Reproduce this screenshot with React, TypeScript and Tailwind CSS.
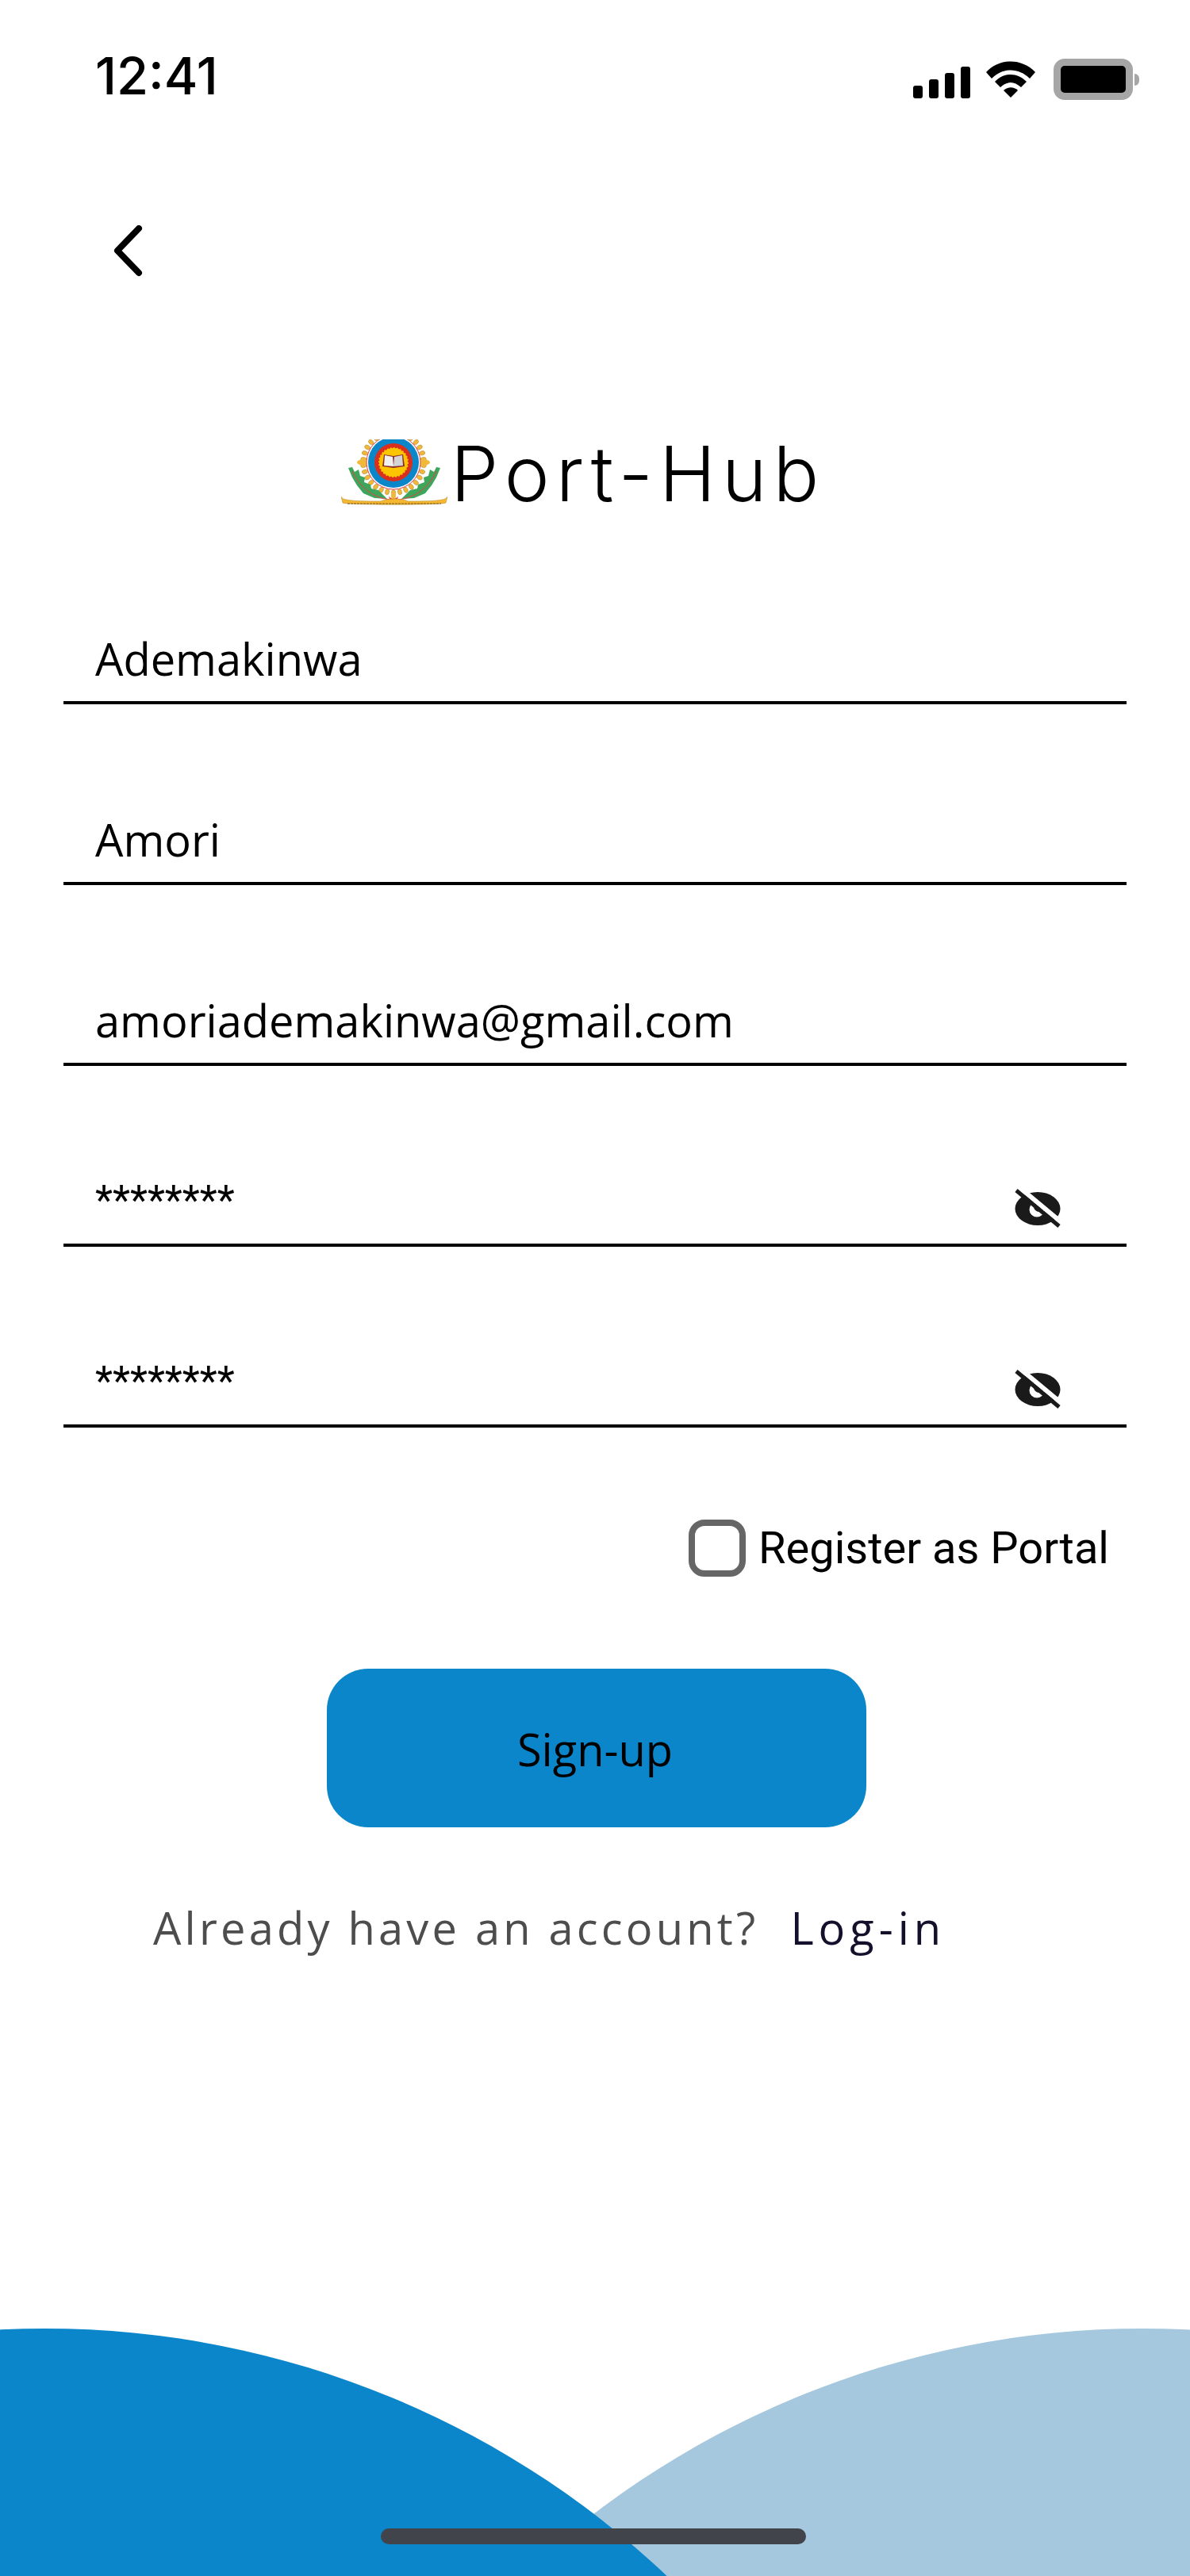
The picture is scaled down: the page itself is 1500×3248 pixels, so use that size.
const fields = [
  { value: "Ademakinwa" },
  { value: "Amori" },
  { value: "amoriademakinwa@gmail.com" },
  { value: "********", secret: true },
  { value: "********", secret: true },
]

function StatusIcons() {
  return (
    <div className="flex items-end gap-[20px]">
      <div className="flex items-end gap-[8px] pb-[2px]">
        <div className="h-[16px] w-[12px] rounded-[3px] bg-black" />
        <div className="h-[24px] w-[12px] rounded-[3px] bg-black" />
        <div className="h-[32px] w-[12px] rounded-[3px] bg-black" />
        <div className="h-[40px] w-[12px] rounded-[3px] bg-black" />
      </div>
      <svg width="62" height="46" viewBox="0 0 62 46" className="mb-[3px]">
        <path d="M0 14 C17 -4 45 -4 62 14 L55 22 C41 8 21 8 7 22 Z" fill="#000" />
        <path d="M11 26 C23 14 39 14 51 26 L44 33 C35 25 27 25 18 33 Z" fill="#000" />
        <path d="M22 37 C27 32 35 32 40 37 L31 46 Z" fill="#000" />
      </svg>
      <div className="ml-[3px] flex items-center gap-[2px]">
        <div className="h-[52px] w-[100px] rounded-[14px] border-[9px] border-[#a6a6a6] bg-black" />
        <div className="h-[15px] w-[6px] rounded-r-full bg-[#a6a6a6]" />
      </div>
    </div>
  )
}

function Logo() {
  const dots = Array.from({ length: 30 }, (_, i) => (i * 360) / 30)
  return (
    <svg width="134" height="86" viewBox="0 0 134 86" className="mb-[7px] overflow-hidden">
      {dots.map((a) => (
        <ellipse
          key={a}
          cx="66"
          cy="-9"
          rx="2.6"
          ry="3.6"
          fill="#f0b93a"
          stroke="#a8842a"
          strokeWidth="0.5"
          transform={`rotate(${a} 66 29)`}
        />
      ))}
      <ellipse cx="27" cy="29" rx="7" ry="3.5" fill="#f0b93a" />
      <ellipse cx="105" cy="29" rx="7" ry="3.5" fill="#f0b93a" />
      <ellipse cx="66" cy="71" rx="3" ry="6" fill="#f0b93a" />
      <circle cx="66" cy="29" r="34" fill="#fff" stroke="#e8404a" strokeWidth="1" />
      <circle cx="66" cy="29" r="32" fill="#0b86c9" />
      <circle cx="66" cy="29" r="24" fill="#db2f1e" />
      <circle cx="66" cy="29" r="18" fill="#fdc400" stroke="#fdc400" strokeWidth="2" strokeDasharray="2 2" />
      <path d="M54 19 L66 21 L78 19 L80 34 L66 36 L52 34 Z" fill="#8c2a2a" />
      <path d="M55 20 L65 22 L66 34 L54 33 Z" fill="#f1f1f1" />
      <path d="M77 20 L67 22 L66 34 L78 33 Z" fill="#d4d4d4" />
      <path
        d="M9 36 L14 35 L17 41 L22 38 L24 46 L30 48 L29 54 L37 57 L38 62 L47 64 L58 75 L42 74 L28 68 L20 58 L14 48 Z"
        fill="#3ea65a"
      />
      <path
        d="M125 36 L120 35 L117 41 L112 38 L110 46 L104 48 L105 54 L97 57 L96 62 L87 64 L76 75 L92 74 L106 68 L114 58 L120 48 Z"
        fill="#3ea65a"
      />
      <path d="M14 40 C24 62 42 74 62 76 M120 40 C110 62 92 74 72 76" fill="none" stroke="#e8404a" strokeWidth="1" />
      <path d="M60 72 L66 76 L72 72 L70 78 L62 78 Z" fill="#e8404a" />
      <path d="M0 72 C2 76 6 78 50 78 C58 74 76 74 84 78 C128 78 132 76 134 72 L132 80 C128 83 6 83 2 80 Z" fill="#f7b731" stroke="#a8842a" strokeWidth="0.5" />
      <path d="M8 81 L126 81" stroke="#7a5a20" strokeWidth="1" strokeDasharray="3 1" />
    </svg>
  )
}

function EyeOff() {
  return (
    <svg width="76" height="66" viewBox="0 0 76 66" className="absolute right-[74px] bottom-[12px]">
      <ellipse cx="38" cy="34" rx="28.5" ry="21" fill="#1a1a1a" />
      <circle cx="37" cy="35" r="9.5" fill="#fff" />
      <circle cx="40" cy="31" r="7" fill="#1a1a1a" />
      <path d="M14.5 6.8 L68.5 51.8" stroke="#fff" strokeWidth="6" />
      <path d="M11 11 L65 56" stroke="#1a1a1a" strokeWidth="5" />
    </svg>
  )
}

function Field({ value, secret }: { value: string; secret?: boolean }) {
  return (
    <div className="relative flex h-[228px] items-end border-b-[4px] border-black pb-[16px] pl-[40px] first:h-[110px]">
      <span className={secret ? "text-[51px] leading-[76px] [font-family:Roboto,sans-serif]" : "text-[56px] leading-[76px]"}>{value}</span>
      {secret && <EyeOff />}
    </div>
  )
}

export default function App() {
  return (
    <div className="relative h-[3248px] w-[1500px] overflow-hidden bg-white text-black [font-family:'Open_Sans',sans-serif]">
      <div className="flex items-start justify-between pt-[60px] pr-[64px] pl-[120px]">
        <span className="text-[65px] leading-[72px] font-medium [font-family:Inter,sans-serif]">12:41</span>
        <div className="pt-[14px]">
          <StatusIcons />
        </div>
      </div>

      <div className="mt-[152px] ml-[142px]">
        <svg width="42" height="68" viewBox="0 0 42 68" fill="none" stroke="#000" strokeWidth="8" strokeLinecap="round" strokeLinejoin="round">
          <path d="M33 4 L6 32 L33 60" />
        </svg>
      </div>

      <div className="mt-[195px] flex items-end gap-[4px] pl-[430px]">
        <Logo />
        <span className="text-[96px] leading-[100px] font-light tracking-[8px] [font-family:Inter,sans-serif]">Port-Hub</span>
      </div>

      <div className="mx-[80px] mt-[131px] flex flex-col">
        {fields.map((f, i) => (
          <Field key={i} value={f.value} secret={f.secret} />
        ))}
      </div>

      <div className="mt-[116px] flex items-center justify-end gap-[16px] pr-[102px]">
        <div className="h-[72px] w-[72px] rounded-[20px] border-[8px] border-[#666]" />
        <span className="text-[56px] leading-[72px] [font-family:Roboto,sans-serif]">Register as Portal</span>
      </div>

      <div className="mt-[116px] flex justify-center pl-[4px]">
        <button className="h-[200px] w-[680px] rounded-[52px] bg-[#0b86ca] pt-[2px] pr-[4px] text-[56px] text-black">Sign-up</button>
      </div>

      <div className="mt-[88px] flex gap-[40px] pl-[193px] text-[56px] leading-[76px]">
        <span className="tracking-[4.2px] text-[#4d4d4d]">Already have an account?</span>
        <span className="tracking-[6px] text-[#14102b]">Log-in</span>
      </div>

      <svg className="absolute bottom-0 left-0" width="1500" height="320" viewBox="0 2928 1500 320">
        <circle cx="1440" cy="4076" r="1140" fill="#a5c8de" />
        <circle cx="57" cy="4076" r="1140" fill="#0b86ca" />
      </svg>
      <div className="absolute bottom-[40px] left-[480px] h-[20px] w-[536px] rounded-full bg-[#41444b]" />
    </div>
  )
}
